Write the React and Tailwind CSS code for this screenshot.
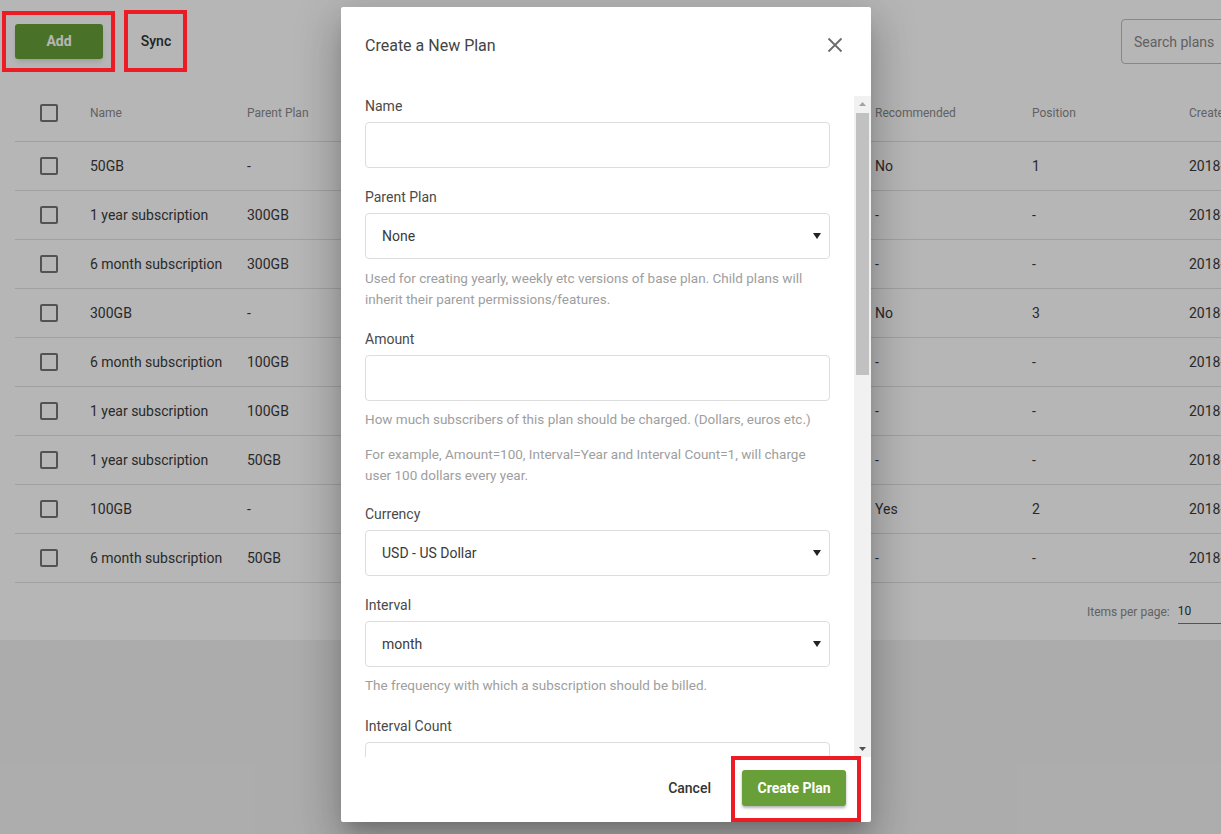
import React from 'react'

const ROWS = [
  { name:'50GB',                 parent:'-',     rec:'No',  pos:'1', created:'2018-03-12' },
  { name:'1 year subscription',  parent:'300GB', rec:'-',   pos:'-', created:'2018-03-12' },
  { name:'6 month subscription', parent:'300GB', rec:'-',   pos:'-', created:'2018-03-12' },
  { name:'300GB',                parent:'-',     rec:'No',  pos:'3', created:'2018-03-12' },
  { name:'6 month subscription', parent:'100GB', rec:'-',   pos:'-', created:'2018-03-12' },
  { name:'1 year subscription',  parent:'100GB', rec:'-',   pos:'-', created:'2018-03-12' },
  { name:'1 year subscription',  parent:'50GB',  rec:'-',   pos:'-', created:'2018-03-12' },
  { name:'100GB',                parent:'-',     rec:'Yes', pos:'2', created:'2018-03-12' },
  { name:'6 month subscription', parent:'50GB',  rec:'-',   pos:'-', created:'2018-03-12' },
]

function Checkbox() {
  return <span className="block w-[18px] h-[18px] border-2 border-[#757575] rounded-[2px]" />
}

function Caret() {
  return (
    <svg width="8" height="6" viewBox="0 0 8 6" className="shrink-0">
      <path d="M0 0h8L4 6z" fill="#222" />
    </svg>
  )
}

function Field({ label, children, help, className = 'mb-5' }) {
  return (
    <div className={className}>
      <div className="text-[14px] leading-[18px] text-[#4a4a4a] mb-[7px]">{label}</div>
      {children}
      {help}
    </div>
  )
}

function Input() {
  return <div className="h-[46px] w-full border border-[#dddddd] rounded-[4px] bg-white" />
}

function Select({ value }) {
  return (
    <div className="h-[46px] w-full border border-[#dddddd] rounded-[4px] bg-white flex items-center justify-between pl-4 pr-[8px]">
      <span className="text-[14px] text-[#3a3a3a]">{value}</span>
      <Caret />
    </div>
  )
}

function Help({ children, className = 'mt-[9px]' }) {
  return <p className={`text-[13.5px] leading-[21px] text-[#9e9e9e] ${className}`}>{children}</p>
}

export default function App() {
  return (
    <div className="relative w-[1221px] h-[834px] overflow-hidden bg-[#f2f2f2] font-['Roboto','Liberation_Sans',sans-serif]">
      {/* page behind the dialog */}
      <div className="w-[1400px] h-[640px] bg-white">
        <div className="flex items-start h-[85px]">
          <button className="ml-[15px] mt-[24px] w-[88px] h-[35px] rounded-[3px] bg-[#689f38] text-white text-[14px] font-bold shadow-md">Add</button>
          <button className="ml-[23px] mt-[24px] w-[60px] h-[35px] text-[14px] font-medium text-[#333]">Sync</button>
          <div className="ml-[935px] mt-[19px] w-[220px] h-[45px] border border-[#bdbdbd] rounded-[4px] flex items-center pl-[12px] pt-[2px] text-[14px] text-[#888]">Search plans</div>
        </div>

        <div className="ml-[15px]">
          <div className="grid grid-cols-[75px_repeat(8,157px)] items-center h-[57px] border-b border-[#e0e0e0] text-[12px] text-[#8a8a8a]">
            <div className="pl-[25px]"><Checkbox /></div>
            <div>Name</div>
            <div>Parent Plan</div>
            <div />
            <div />
            <div />
            <div>Recommended</div>
            <div>Position</div>
            <div>Created At</div>
          </div>
          {ROWS.map((r, i) => (
            <div key={i} className="grid grid-cols-[75px_repeat(8,157px)] items-center h-[49px] border-b border-[#e0e0e0] text-[14px] text-[#3a3a3a]">
              <div className="pl-[25px]"><Checkbox /></div>
              <div>{r.name}</div>
              <div>{r.parent}</div>
              <div />
              <div />
              <div />
              <div>{r.rec}</div>
              <div>{r.pos}</div>
              <div>{r.created}</div>
            </div>
          ))}
          <div className="flex items-center h-[57px] pl-[1072px] text-[12px]">
            <span className="text-[#8a8a8a]">Items per page:</span>
            <span className="ml-[8px] w-[70px] pt-[2px] pb-[3px] border-b border-[#757575] text-[#333]">10</span>
          </div>
        </div>
      </div>

      {/* backdrop */}
      <div className="absolute inset-0 bg-black/[0.286]" />

      {/* dialog */}
      <div className="absolute left-[341px] top-[7px] w-[530px] h-[815px] bg-white rounded-[2px] shadow-[0_11px_15px_-7px_rgba(0,0,0,0.2),0_24px_38px_3px_rgba(0,0,0,0.14),0_9px_46px_8px_rgba(0,0,0,0.12)] flex flex-col">
        <div className="h-[89px] shrink-0 flex items-start justify-between pl-6 pr-[28px] pt-[29px]">
          <h2 className="text-[16px] leading-5 text-[#444]">Create a New Plan</h2>
          <svg width="16" height="16" viewBox="0 0 16 16" className="mt-[1px]">
            <path d="M1.5 1.5l13 13M14.5 1.5l-13 13" stroke="#6b6b6b" strokeWidth="1.8" />
          </svg>
        </div>

        <div className="flex-1 flex min-h-0">
          <div className="flex-1 overflow-hidden pl-6 pr-6 pt-[1px]">
            <Field label="Name"><Input /></Field>
            <Field label="Parent Plan" help={<Help>Used for creating yearly, weekly etc versions of base plan. Child plans will inherit their parent permissions/features.</Help>}>
              <Select value="None" />
            </Field>
            <Field label="Amount" className="mb-[19px]" help={<>
              <Help className="mt-[8px]">How much subscribers of this plan should be charged. (Dollars, euros etc.)</Help>
              <Help className="mt-[14px]">For example, Amount=100, Interval=Year and Interval Count=1, will charge user 100 dollars every year.</Help>
            </>}>
              <Input />
            </Field>
            <Field label="Currency" className="mb-5"><Select value="USD - US Dollar" /></Field>
            <Field label="Interval" className="mb-[21px]" help={<Help className="mt-[8px]">The frequency with which a subscription should be billed.</Help>}>
              <Select value="month" />
            </Field>
            <Field label="Interval Count"><Input /></Field>
          </div>

          {/* scrollbar */}
          <div className="w-[17px] shrink-0 bg-[#f1f1f1] flex flex-col items-center">
            <div className="h-[16px] flex items-center justify-center">
              <svg width="7" height="4" viewBox="0 0 7 4"><path d="M0 4h7L3.5 0z" fill="#a3a3a3" /></svg>
            </div>
            <div className="w-[13px] h-[262px] bg-[#c1c1c1] mt-[1px]" />
            <div className="flex-1" />
            <div className="h-[16px] flex items-center justify-center">
              <svg width="7" height="4" viewBox="0 0 7 4"><path d="M0 0h7L3.5 4z" fill="#505050" /></svg>
            </div>
          </div>
        </div>

        <div className="h-[65px] shrink-0 flex items-center justify-end gap-[15px] pr-[25px] pb-[3px]">
          <button className="h-9 px-4 text-[14px] font-medium text-[#333]">Cancel</button>
          <button className="w-[104px] h-9 rounded-[3px] bg-[#689f38] text-white text-[14px] font-bold shadow-[0_2px_3px_rgba(0,0,0,0.3)]">Create Plan</button>
        </div>
      </div>

      {/* annotation boxes */}
      <div className="absolute left-[2px] top-[11px] w-[113px] h-[61px] border-4 border-[#ed1c24]" />
      <div className="absolute left-[124px] top-[10px] w-[63px] h-[62px] border-4 border-[#ed1c24]" />
      <div className="absolute left-[731px] top-[756px] w-[130px] h-[66px] border-4 border-[#ed1c24]" />
    </div>
  )
}
